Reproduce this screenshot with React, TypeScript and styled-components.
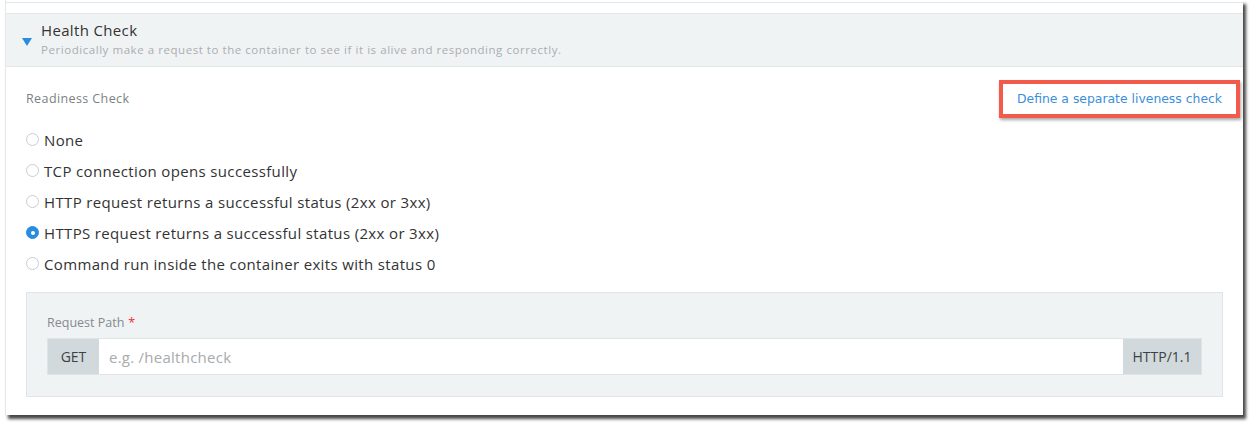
import React, { useState } from 'react';
import styled, { createGlobalStyle } from 'styled-components';

const GlobalStyle = createGlobalStyle`
  html, body {
    margin: 0;
    padding: 0;
    background: #ffffff;
  }
  body {
    font-family: "Open Sans", Lato, sans-serif;
    color: #333;
  }
`;

const Page = styled.div`
  width: 1255px;
  height: 426px;
  padding: 0 12px 0 5px;
  box-sizing: border-box;
  overflow: hidden;
`;

const Panel = styled.div`
  background: #fff;
  border-left: 1px solid #e4e8ea;
  box-shadow: 3px 4px 3px rgba(0, 0, 0, 0.72);
`;

const PrevSectionTail = styled.div`
  height: 2px;
  border-bottom: 1px solid #e2e6e9;
`;

const SectionHeader = styled.div`
  margin-top: 10px;
  height: 54px;
  box-sizing: border-box;
  background: #f0f3f4;
  border-top: 1px solid #e2e6e9;
  border-bottom: 1px solid #e2e6e9;
  display: flex;
  align-items: flex-start;
  padding: 6px 0 0 16px;
  gap: 9px;
`;

const Caret = styled.span`
  width: 0;
  height: 0;
  margin-top: 18px;
  border-left: 5px solid transparent;
  border-right: 5px solid transparent;
  border-top: 8px solid #2b8be0;
`;

const Titles = styled.div`
  display: flex;
  flex-direction: column;
`;

const Title = styled.div`
  font-size: 15px;
  line-height: 20px;
  letter-spacing: 0.35px;
  color: #333;
`;

const Subtitle = styled.div`
  margin-top: 2px;
  font-size: 11.5px;
  line-height: 15px;
  letter-spacing: 0.55px;
  color: #aaaeb1;
`;

const Body = styled.div`
  padding: 13px 20px 18px 20px;
`;

const TopRow = styled.div`
  display: flex;
  align-items: center;
  justify-content: space-between;
  height: 37px;
`;

const FieldLabel = styled.div`
  font-size: 12.5px;
  letter-spacing: 0.4px;
  color: #7b7f83;
`;

const LinkBox = styled.a`
  margin-right: -17px;
  height: 38px;
  box-sizing: border-box;
  padding: 0 14px;
  display: flex;
  align-items: center;
  border: 4px solid #f25b4c;
  box-shadow: 1px 2px 3px rgba(0, 0, 0, 0.35);
  font-family: "DejaVu Sans", Verdana, sans-serif;
  font-size: 12.4px;
  color: #3b8fd9;
  text-decoration: none;
  cursor: pointer;
`;

const RadioList = styled.div`
  margin-top: 7px;
  display: flex;
  flex-direction: column;
`;

const RadioRow = styled.label`
  height: 31px;
  display: flex;
  align-items: center;
  gap: 5px;
  font-size: 15px;
  letter-spacing: 0.35px;
  color: #333;
  cursor: pointer;
`;

const RadioDot = styled.span<{ $checked: boolean }>`
  width: 13px;
  height: 13px;
  box-sizing: border-box;
  border-radius: 50%;
  border: 1px solid ${p => (p.$checked ? '#2b8be0' : '#c9cdd0')};
  background: ${p => (p.$checked ? '#2b8be0' : '#fff')};
  display: flex;
  align-items: center;
  justify-content: center;
  flex-shrink: 0;

  &::after {
    content: '';
    width: 4px;
    height: 4px;
    border-radius: 50%;
    background: #fff;
    display: ${p => (p.$checked ? 'block' : 'none')};
  }
`;

const SubBox = styled.div`
  margin-top: 13px;
  background: #f0f3f4;
  border: 1px solid #e0e5e8;
  padding: 21px 20px 21px 20px;
`;

const RequestLabel = styled.div`
  font-size: 12.5px;
  line-height: 17px;
  color: #85898d;
  margin-bottom: 7px;
`;

const Required = styled.span`
  color: #e8333a;
  margin-left: 4px;
`;

const InputGroup = styled.div`
  display: flex;
  height: 37px;
  border: 1px solid #dfe4e7;
  box-sizing: border-box;
`;

const Addon = styled.div<{ $width: number }>`
  width: ${p => p.$width}px;
  background: #d1d9dc;
  color: #3d4145;
  font-size: 14px;
  display: flex;
  align-items: center;
  justify-content: center;
  flex-shrink: 0;
`;

const PathInput = styled.input`
  flex: 1;
  border: none;
  outline: none;
  background: #fff;
  padding: 0 10px;
  font-family: "Open Sans", Lato, sans-serif;
  font-size: 15px;
  letter-spacing: 0.25px;
  color: #333;

  &::placeholder {
    color: #a7abae;
  }
`;

const options = [
  'None',
  'TCP connection opens successfully',
  'HTTP request returns a successful status (2xx or 3xx)',
  'HTTPS request returns a successful status (2xx or 3xx)',
  'Command run inside the container exits with status 0',
];

export default function App() {
  const [selected, setSelected] = useState(3);

  return (
    <>
      <GlobalStyle />
      <Page>
        <Panel>
          <PrevSectionTail />
          <SectionHeader>
            <Caret />
            <Titles>
              <Title>Health Check</Title>
              <Subtitle>Periodically make a request to the container to see if it is alive and responding correctly.</Subtitle>
            </Titles>
          </SectionHeader>
          <Body>
            <TopRow>
              <FieldLabel>Readiness Check</FieldLabel>
              <LinkBox>Define a separate liveness check</LinkBox>
            </TopRow>
            <RadioList>
              {options.map((opt, i) => (
                <RadioRow key={opt} onClick={() => setSelected(i)}>
                  <RadioDot $checked={selected === i} />
                  {opt}
                </RadioRow>
              ))}
            </RadioList>
            <SubBox>
              <RequestLabel>
                Request Path<Required>*</Required>
              </RequestLabel>
              <InputGroup>
                <Addon $width={51}>GET</Addon>
                <PathInput placeholder="e.g. /healthcheck" />
                <Addon $width={78}>HTTP/1.1</Addon>
              </InputGroup>
            </SubBox>
          </Body>
        </Panel>
      </Page>
    </>
  );
}
